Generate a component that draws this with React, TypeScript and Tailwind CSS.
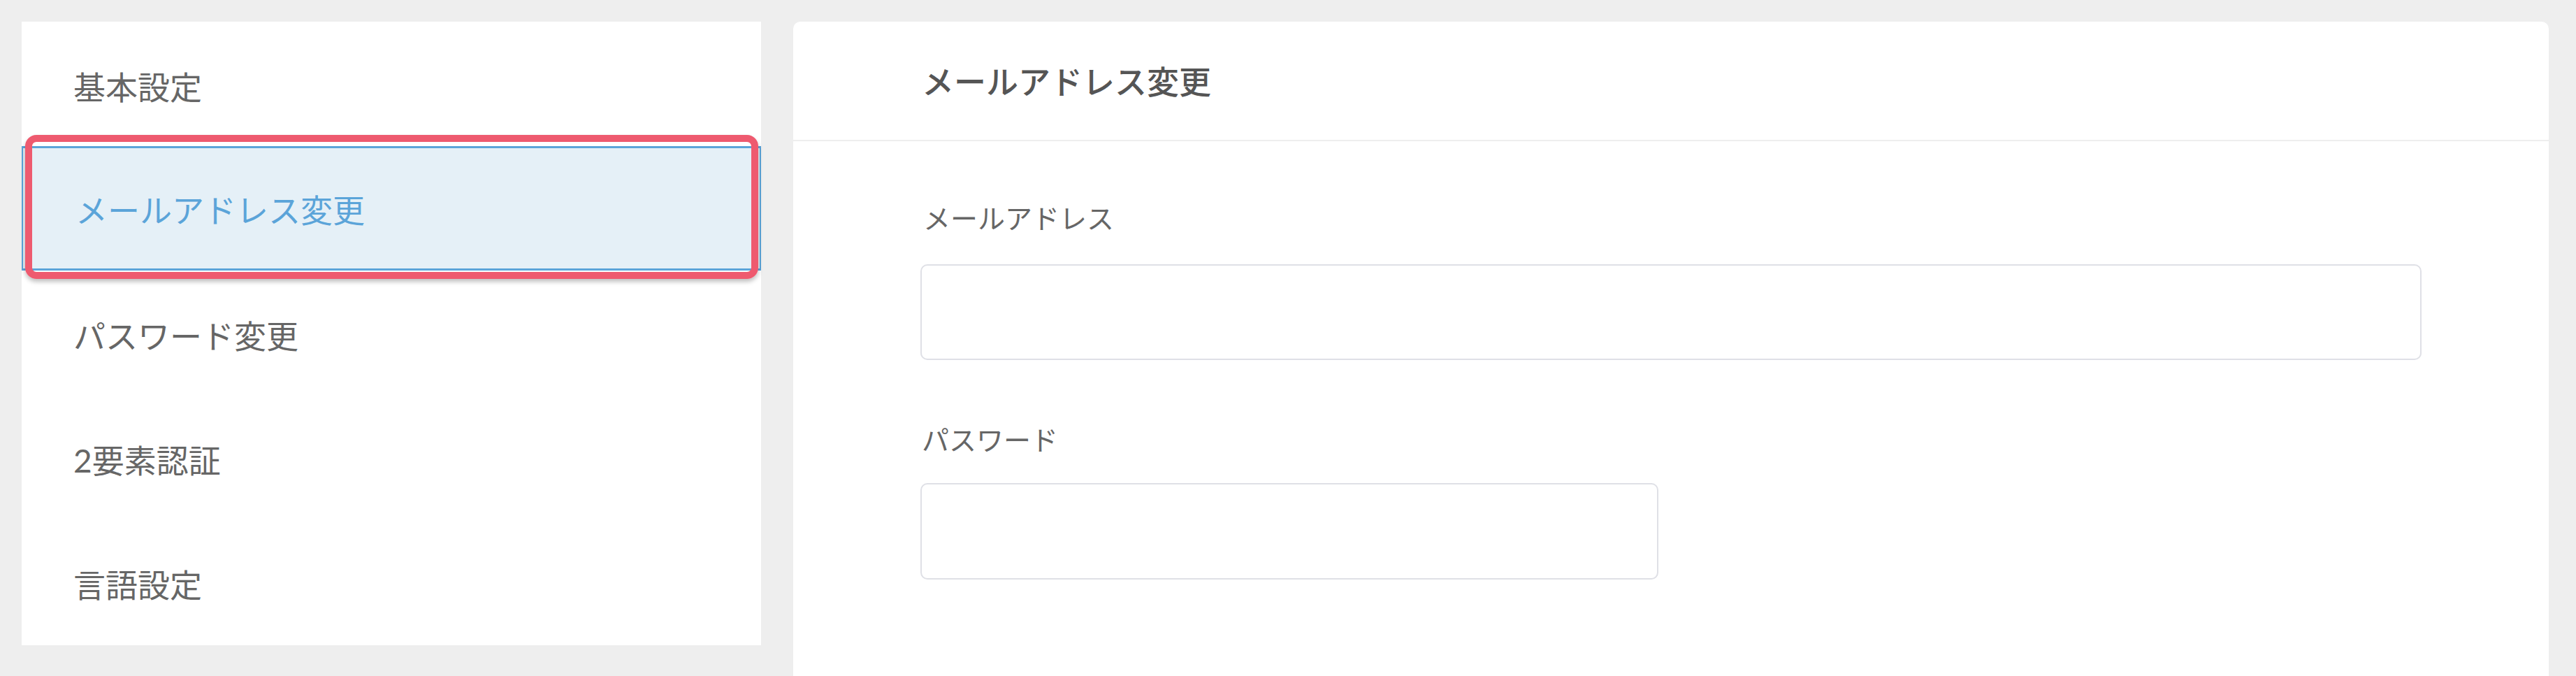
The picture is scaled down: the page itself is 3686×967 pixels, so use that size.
import React from "react";

const font = { fontFamily: '"Lato", "Noto Sans CJK JP", sans-serif' };

const items = ["基本設定", "メールアドレス変更", "パスワード変更", "2要素認証", "言語設定"];

export default function App() {
  return (
    <div
      className="h-screen overflow-hidden bg-[#eeeeee] flex items-stretch gap-[46px] pl-[31px] pr-[39px] pt-[31px]"
      style={font}
    >
      <nav className="w-[1058px] self-start bg-white flex flex-col pb-[2px]">
        {items.map((label, i) =>
          i === 1 ? (
            <div
              key={label}
              className="relative h-[178px] box-border flex items-center pl-[75px] pt-[6px] bg-[#e5f0f7] border-x-2 border-y-[3px] border-[#5ba4d9] text-[#5ba4d9] text-[46px] leading-none"
            >
              <span>{label}</span>
              <div className="absolute -top-[19px] -bottom-[15px] left-[3px] right-[2px] rounded-[16px] border-[10px] border-[#ee5a6f] shadow-[0_4px_6px_rgba(0,0,0,0.25)] pointer-events-none" />
            </div>
          ) : (
            <div
              key={label}
              className="h-[178px] flex items-center pl-[74px] pt-[9px] text-[#666666] text-[46px] leading-none"
            >
              {label}
            </div>
          )
        )}
      </nav>
      <main className="flex-1 bg-white rounded-t-[10px] flex flex-col">
        <div className="h-[171px] border-b-2 border-[#eeeeee] flex items-center pl-[184px] pt-[3px] text-[46px] font-medium text-[#555555] leading-none">
          メールアドレス変更
        </div>
        <div className="px-[182px] pt-[82px] flex flex-col">
          <label className="text-[39px] leading-[57px] text-[#666666] pl-[4px]">メールアドレス</label>
          <div className="mt-[37px] h-[137px] w-full rounded-[10px] border-2 border-[#dfe0e6] bg-white" />
          <label className="mt-[86px] text-[39px] leading-[57px] text-[#666666] pl-[2px]">パスワード</label>
          <div className="mt-[33px] h-[138px] w-[1056px] rounded-[10px] border-2 border-[#dfe0e6] bg-white" />
        </div>
      </main>
    </div>
  );
}
